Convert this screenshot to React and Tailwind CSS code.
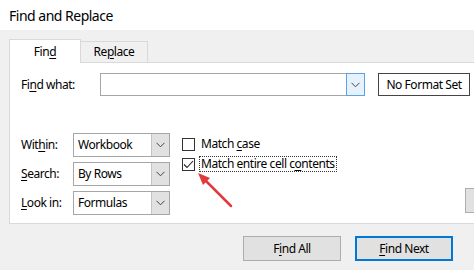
import React from 'react'

const U = ({ children }) => <span className="underline underline-offset-2">{children}</span>

function Chevron() {
  return (
    <svg width="9" height="6" viewBox="0 0 9 6">
      <path d="M0.5 0.8 L4.5 4.8 L8.5 0.8" fill="none" stroke="#444" strokeWidth="1" />
    </svg>
  )
}

function Select({ value }) {
  return (
    <div className="flex h-[24px] w-[97px] border border-[#a6a6a6] bg-white">
      <div className="flex flex-1 items-center pl-[4px]">{value}</div>
      <div className="flex w-[18px] items-center justify-center border-l border-[#c4c4c4] bg-[#e1e1e1]">
        <Chevron />
      </div>
    </div>
  )
}

function Row({ label, value }) {
  return (
    <div className="flex h-[24px] items-center">
      <div className="w-[52px]">{label}</div>
      <Select value={value} />
    </div>
  )
}

function Checkbox({ checked }) {
  return (
    <div className="flex h-[13px] w-[13px] items-center justify-center border border-[#333] bg-white">
      {checked && (
        <svg width="11" height="9" viewBox="0 0 11 9">
          <path d="M1 4.5 L4 7.5 L10 1" fill="none" stroke="#222" strokeWidth="1.1" />
        </svg>
      )}
    </div>
  )
}

export default function App() {
  return (
    <div className="relative h-[270px] w-[474px] overflow-hidden bg-[#f0f0f0] font-['Segoe_UI','Noto_Sans',sans-serif] text-[12px] tracking-[-0.45px] text-black">
      {/* Title */}
      <div className="flex h-[30px] items-center bg-white pl-[9px] text-[14px] tracking-[-0.5px]">Find and Replace</div>

      <div className="pl-[9px] pt-[9px]">
        {/* Tabs */}
        <div className="flex items-end">
          <div className="relative z-10 mb-[-1px] flex h-[24px] w-[72px] items-center justify-center border border-b-0 border-[#d9d9d9] bg-white">
            Fin<U>d</U>
          </div>
          <div className="flex h-[21px] w-[67px] items-center justify-center border border-b-0 border-l-0 border-[#d9d9d9] bg-[#f0f0f0]">
            Re<U>p</U>lace
          </div>
        </div>

        {/* Panel */}
        <div className="h-[162px] w-[600px] border border-[#d9d9d9] bg-white pl-[11px] pt-[10px]">
          <div className="flex h-[23px] items-center">
            <div className="w-[79px]">Fi<U>n</U>d what:</div>
            <div className="h-[23px] w-[246px] border border-r-0 border-[#a6a6a6] bg-white" />
            <div className="flex h-[23px] w-[19px] items-center justify-center border border-[#5fa2e3] bg-[#e5f1fb]">
              <Chevron />
            </div>
            <div className="ml-[13px] flex h-[23px] w-[92px] items-center justify-center border border-[#444] bg-white">
              No Format Set
            </div>
          </div>

          <div className="mt-[37px] flex">
            <div className="flex flex-col gap-[5px]">
              <Row label={<>Wit<U>h</U>in:</>} value="Workbook" />
              <Row label={<><U>S</U>earch:</>} value="By Rows" />
              <Row label={<><U>L</U>ook in:</>} value="Formulas" />
            </div>

            <div className="ml-[12px] mt-[3px] flex w-[283px] flex-col gap-[4px]">
              <div className="flex h-[16px] items-center">
                <Checkbox />
                <span className="ml-[6px]">Match <U>c</U>ase</span>
              </div>
              <div className="flex h-[16px] items-center">
                <Checkbox checked />
                <span className="ml-[4px] border border-dotted border-[#333] px-[1px] leading-[14px]">
                  Match entire cell c<U>o</U>ntents
                </span>
              </div>
            </div>

            <div className="mt-[55px] h-[25px] w-[80px] border border-[#adadad] bg-[#e1e1e1]" />
          </div>
        </div>

        {/* Buttons */}
        <div className="mt-[12px] flex gap-[14px] pl-[234px]">
          <div className="flex h-[25px] w-[98px] items-center justify-center border border-[#adadad] bg-[#e1e1e1]">
            F<U>i</U>nd All
          </div>
          <div className="flex h-[25px] w-[98px] items-center justify-center border-2 border-[#0078d7] bg-[#e1e1e1]">
            <U>F</U>ind Next
          </div>
        </div>
      </div>

      {/* Red annotation arrow */}
      <svg className="pointer-events-none absolute left-0 top-0" width="474" height="270">
        <line x1="231" y1="206" x2="205" y2="180" stroke="#e03a3e" strokeWidth="2.5" strokeLinecap="round" />
        <polygon points="198,173 210,178 203,185" fill="#e03a3e" />
      </svg>
    </div>
  )
}
